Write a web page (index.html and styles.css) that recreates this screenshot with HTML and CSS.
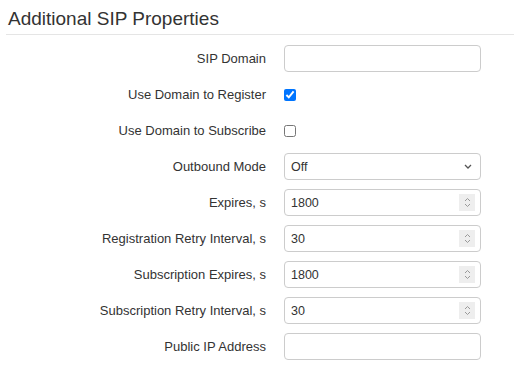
FILE: index.html
```html
<!DOCTYPE html>
<html lang="en">
<head>
    <meta charset="UTF-8">
    <title>Additional SIP Properties</title>
    <link rel="stylesheet" href="styles.css">
</head>
<body>
    <div class="panel">
        <h2 class="panel-title">Additional SIP Properties</h2>
        <form class="props">
            <label class="prop-label" for="sipDomain">SIP Domain</label>
            <div class="field"><input type="text" id="sipDomain" class="field-input"></div>

            <label class="prop-label" for="useRegister">Use Domain to Register</label>
            <div class="check"><input type="checkbox" id="useRegister" checked></div>

            <label class="prop-label" for="useSubscribe">Use Domain to Subscribe</label>
            <div class="check"><input type="checkbox" id="useSubscribe"></div>

            <label class="prop-label" for="outbound">Outbound Mode</label>
            <div class="field">
                <span class="field-input" id="outbound">Off</span>
                <svg class="chevron" width="8" height="5" viewBox="0 0 8 5"><path d="M1 1l3 3 3-3" fill="none" stroke="#555" stroke-width="1.3"/></svg>
            </div>

            <label class="prop-label" for="expires">Expires, s</label>
            <div class="field">
                <input type="text" id="expires" class="field-input" value="1800">
                <span class="spin"><svg width="7" height="11" viewBox="0 0 7 11"><path d="M1 4l2.5-2.5L6 4M1 7l2.5 2.5L6 7" fill="none" stroke="#999" stroke-width="1"/></svg></span>
            </div>

            <label class="prop-label" for="regRetry">Registration Retry Interval, s</label>
            <div class="field">
                <input type="text" id="regRetry" class="field-input" value="30">
                <span class="spin"><svg width="7" height="11" viewBox="0 0 7 11"><path d="M1 4l2.5-2.5L6 4M1 7l2.5 2.5L6 7" fill="none" stroke="#999" stroke-width="1"/></svg></span>
            </div>

            <label class="prop-label" for="subExpires">Subscription Expires, s</label>
            <div class="field">
                <input type="text" id="subExpires" class="field-input" value="1800">
                <span class="spin"><svg width="7" height="11" viewBox="0 0 7 11"><path d="M1 4l2.5-2.5L6 4M1 7l2.5 2.5L6 7" fill="none" stroke="#999" stroke-width="1"/></svg></span>
            </div>

            <label class="prop-label" for="subRetry">Subscription Retry Interval, s</label>
            <div class="field">
                <input type="text" id="subRetry" class="field-input" value="30">
                <span class="spin"><svg width="7" height="11" viewBox="0 0 7 11"><path d="M1 4l2.5-2.5L6 4M1 7l2.5 2.5L6 7" fill="none" stroke="#999" stroke-width="1"/></svg></span>
            </div>

            <label class="prop-label" for="publicIp">Public IP Address</label>
            <div class="field"><input type="text" id="publicIp" class="field-input"></div>
        </form>
    </div>
</body>
</html>
```

FILE: styles.css
```css
* {
    font-family: "Liberation Sans", Arial, sans-serif;
    margin: 0;
    padding: 0;
    box-sizing: border-box;
}

body {
    background: #fff;
    color: #333;
}

.panel {
    padding: 0 0 0 6px;
}

.panel-title {
    font-size: 19px;
    font-weight: 400;
    color: #333;
    padding: 8px 0 0 2px;
    height: 35px;
    border-bottom: 1px solid #e5e5e5;
}

.props {
    display: grid;
    grid-template-columns: 260px 197px;
    column-gap: 18px;
    row-gap: 9px;
    padding-top: 10px;
}

.prop-label {
    font-size: 13px;
    text-align: right;
    align-self: center;
    color: #333;
}

.field {
    display: flex;
    align-items: center;
    height: 27px;
    border: 1px solid #ccc;
    border-radius: 4px;
    padding: 0 5px 0 6px;
}

.field-input {
    flex: 1;
    min-width: 0;
    border: none;
    outline: none;
    background: none;
    font-size: 12.5px;
    color: #333;
}

.check {
    display: flex;
    align-items: center;
    height: 27px;
}

.check input {
    width: 12px;
    height: 12px;
    margin: 0;
}

.chevron {
    margin-right: 3px;
}

.spin {
    display: flex;
    align-items: center;
    justify-content: center;
    width: 16px;
    height: 17px;
    background: #eee;
}
```
